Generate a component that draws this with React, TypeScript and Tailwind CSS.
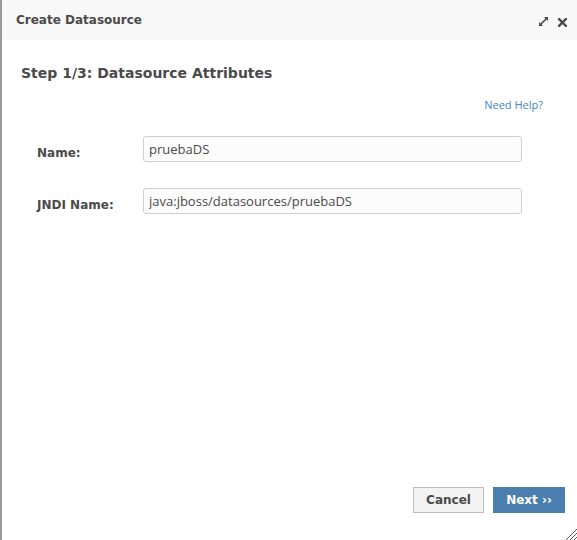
import React from 'react'

// ─── Header icons ─────────────────────────────────────────────────────────────
function ExpandIcon() {
  return (
    <svg width="12" height="12" viewBox="0 0 12 12" className="text-[#4a4a4a]">
      <path d="M7 1h4v4l-1.4-1.4L4.6 8.6 6 10H2V6l1.4 1.4 5-5z" fill="currentColor" />
    </svg>
  )
}

function CloseIcon() {
  return (
    <svg width="9" height="9" viewBox="0 0 9 9" className="text-[#4a4a4a]">
      <path d="M1 1l7 7M8 1L1 8" stroke="currentColor" strokeWidth="2.4" strokeLinecap="square" />
    </svg>
  )
}

function ResizeGrip() {
  return (
    <svg width="12" height="12" viewBox="0 0 12 12" className="text-[#555]">
      <path d="M12 1L1 12M12 5L5 12M12 9L9 12" stroke="currentColor" strokeWidth="1" />
    </svg>
  )
}

const bold = "font-['DejaVu_Sans',sans-serif] font-bold"

// ─── Field row ────────────────────────────────────────────────────────────────
function Field({ label, value }: { label: string; value: string }) {
  return (
    <div className="flex items-center">
      <label className={`w-[106px] pt-[8px] text-[12px] text-[#4a4a4a] ${bold}`}>{label}</label>
      <input
        readOnly
        value={value}
        className="h-[26px] w-[379px] rounded-[3px] border border-[#cfcfcf] bg-[#fcfcfc] px-[5px] text-[13px] text-[#4a4a4a] outline-none"
      />
    </div>
  )
}

export default function App() {
  return (
    <div
      className="relative flex h-[540px] w-[577px] flex-col border-l-2 border-[#9a9a9a] bg-white"
      style={{ fontFamily: '"Open Sans", "Liberation Sans", sans-serif' }}
    >
      {/* Header */}
      <div className="flex h-[40px] items-center justify-between bg-[#f8f8f8] pl-[14px] pr-[10px]">
        <h1 className={`text-[12px] text-[#4a4a4a] ${bold}`}>Create Datasource</h1>
        <div className="flex items-center gap-[9px] pt-[4px]">
          <ExpandIcon />
          <CloseIcon />
        </div>
      </div>

      {/* Body */}
      <div className="flex flex-1 flex-col px-[19px] pt-[23px]">
        <h2 className={`text-[14px] text-[#4a4a4a] ${bold}`}>Step 1/3: Datasource Attributes</h2>
        <div className="mt-[13px] flex justify-end pr-[15px]">
          <a className="text-[11px] text-[#3f86c6]">Need Help?</a>
        </div>
        <div className="mt-[22px] flex flex-col gap-[26px] pl-[16px]">
          <Field label="Name:" value="pruebaDS" />
          <Field label="JNDI Name:" value="java:jboss/datasources/pruebaDS" />
        </div>
      </div>

      {/* Footer */}
      <div className="flex justify-end gap-[9px] pb-[27px] pr-[12px]">
        <button className={`h-[26px] w-[71px] border border-[#bdbdbd] bg-[#f3f3f3] text-[12px] text-[#4a4a4a] ${bold}`}>
          Cancel
        </button>
        <button className={`h-[26px] w-[72px] bg-[#4a7eae] text-[12px] text-white ${bold}`}>
          Next ››
        </button>
      </div>

      <div className="absolute bottom-0 right-0">
        <ResizeGrip />
      </div>
    </div>
  )
}
